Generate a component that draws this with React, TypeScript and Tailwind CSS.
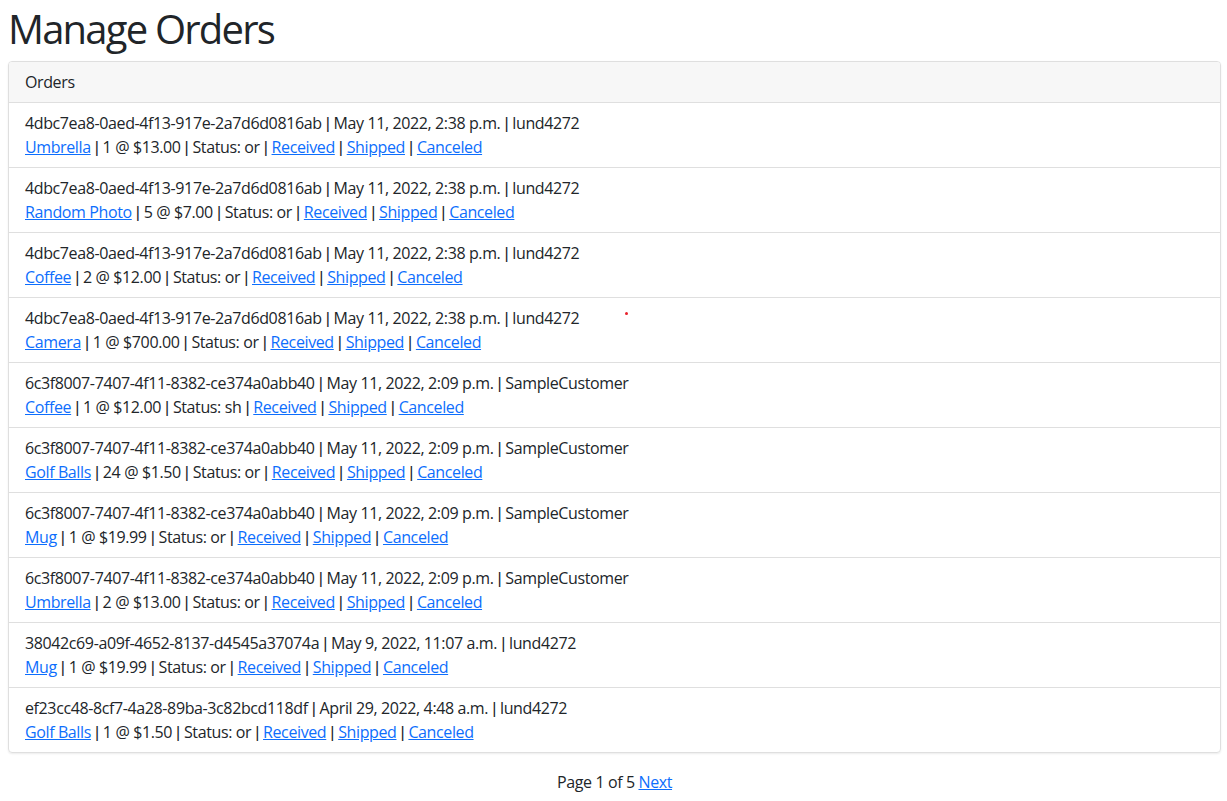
type Order = {
    id: string
    date: string
    user: string
    product: string
    qty: number
    price: string
    status: string
}

const orders: Order[] = [
    { id: '4dbc7ea8-0aed-4f13-917e-2a7d6d0816ab', date: 'May 11, 2022, 2:38 p.m.', user: 'lund4272', product: 'Umbrella', qty: 1, price: '$13.00', status: 'or' },
    { id: '4dbc7ea8-0aed-4f13-917e-2a7d6d0816ab', date: 'May 11, 2022, 2:38 p.m.', user: 'lund4272', product: 'Random Photo', qty: 5, price: '$7.00', status: 'or' },
    { id: '4dbc7ea8-0aed-4f13-917e-2a7d6d0816ab', date: 'May 11, 2022, 2:38 p.m.', user: 'lund4272', product: 'Coffee', qty: 2, price: '$12.00', status: 'or' },
    { id: '4dbc7ea8-0aed-4f13-917e-2a7d6d0816ab', date: 'May 11, 2022, 2:38 p.m.', user: 'lund4272', product: 'Camera', qty: 1, price: '$700.00', status: 'or' },
    { id: '6c3f8007-7407-4f11-8382-ce374a0abb40', date: 'May 11, 2022, 2:09 p.m.', user: 'SampleCustomer', product: 'Coffee', qty: 1, price: '$12.00', status: 'sh' },
    { id: '6c3f8007-7407-4f11-8382-ce374a0abb40', date: 'May 11, 2022, 2:09 p.m.', user: 'SampleCustomer', product: 'Golf Balls', qty: 24, price: '$1.50', status: 'or' },
    { id: '6c3f8007-7407-4f11-8382-ce374a0abb40', date: 'May 11, 2022, 2:09 p.m.', user: 'SampleCustomer', product: 'Mug', qty: 1, price: '$19.99', status: 'or' },
    { id: '6c3f8007-7407-4f11-8382-ce374a0abb40', date: 'May 11, 2022, 2:09 p.m.', user: 'SampleCustomer', product: 'Umbrella', qty: 2, price: '$13.00', status: 'or' },
    { id: '38042c69-a09f-4652-8137-d4545a37074a', date: 'May 9, 2022, 11:07 a.m.', user: 'lund4272', product: 'Mug', qty: 1, price: '$19.99', status: 'or' },
    { id: 'ef23cc48-8cf7-4a28-89ba-3c82bcd118df', date: 'April 29, 2022, 4:48 a.m.', user: 'lund4272', product: 'Golf Balls', qty: 1, price: '$1.50', status: 'or' },
]

const linkCls = 'text-[#0d6efd] underline'

// Open Sans draws a very wide bar, so the separators use a narrower face
function Sep() {
    return <span className="[font-family:'Liberation_Sans',sans-serif]"> | </span>
}

export default function App() {
    return (
        <div className="relative min-h-[801px] bg-white pl-2 pr-[6px] pt-[5px] text-[16px] leading-6 tracking-[-0.024em] text-[#212529] [font-family:'Open_Sans',sans-serif]">
            <h1 className="mb-2 text-[40px] leading-[48px] font-normal tracking-[-0.045em]">Manage Orders</h1>

            <div className="overflow-hidden rounded border border-[#dfdfdf] shadow-[0_1px_2px_rgba(0,0,0,0.08)]">
                <div className="border-b border-[#dfdfdf] bg-[#f7f7f7] px-4 py-2">Orders</div>
                {orders.map((o, i) => (
                    <div
                        key={i}
                        className={
                            i < orders.length - 1
                                ? 'border-b border-[#dfdfdf] px-4 py-2'
                                : 'px-4 py-2'
                        }
                    >
                        <div className="h-6">
                            {o.id}<Sep />{o.date}<Sep />{o.user}
                        </div>
                        <div className="h-6">
                            <a href="#" className={linkCls}>{o.product}</a><Sep />{o.qty} @ {o.price}<Sep />Status: {o.status}<Sep />
                            <a href="#" className={linkCls}>Received</a><Sep />
                            <a href="#" className={linkCls}>Shipped</a><Sep />
                            <a href="#" className={linkCls}>Canceled</a>
                        </div>
                    </div>
                ))}
            </div>

            <div className="mt-[17px] text-center">
                Page 1 of 5 <a href="#" className={linkCls}>Next</a>
            </div>

            {/* stray red dot from the screenshot */}
            <span className="absolute left-[625px] top-[312px] h-[3px] w-[3px] rounded-full bg-[#e8202a]" />
        </div>
    )
}
